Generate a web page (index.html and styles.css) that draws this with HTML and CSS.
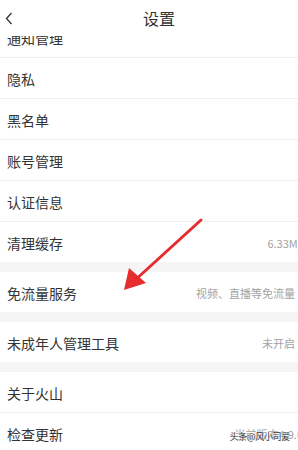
FILE: index.html
```html
<!DOCTYPE html>
<html lang="zh">
<head>
<meta charset="utf-8">
<link rel="stylesheet" href="styles.css">
</head>
<body>
<div class="page">
  <header class="header">
    <span class="back">
      <svg width="8" height="13" viewBox="0 0 8 13"><path d="M6.5 1 L1.5 6.5 L6.5 12" fill="none" stroke="#333" stroke-width="1.3"/></svg>
    </span>
    <h1 class="title">设置</h1>
  </header>
  <main class="main">
    <div class="scroll">
      <section class="group">
        <div class="row"><span class="label">通知管理</span></div>
        <div class="row"><span class="label">隐私</span></div>
        <div class="row"><span class="label">黑名单</span></div>
        <div class="row"><span class="label">账号管理</span></div>
        <div class="row"><span class="label">认证信息</span></div>
        <div class="row"><span class="label">清理缓存</span><span class="value cut-cache">6.33MB</span></div>
      </section>
      <section class="group">
        <div class="row"><span class="label">免流量服务</span><span class="value">视频、直播等免流量</span></div>
      </section>
      <section class="group">
        <div class="row"><span class="label">未成年人管理工具</span><span class="value">未开启</span></div>
      </section>
      <section class="group">
        <div class="row"><span class="label">关于火山</span></div>
        <div class="row"><span class="label">检查更新</span><span class="value cut-version">当前版本4.9.0</span></div>
      </section>
    </div>
  </main>
  <svg class="pointer" width="298" height="450" viewBox="0 0 298 450">
    <line x1="201" y1="220" x2="133" y2="282" stroke="#e62c2c" stroke-width="3" stroke-linecap="round"/>
    <polygon points="124,290 129,268 146,283" fill="#e62c2c"/>
  </svg>
  <div class="watermark">头条@风小司爱</div>
</div>
</body>
</html>
```
FILE: styles.css
```css
* { box-sizing: border-box; margin: 0; padding: 0; }
html, body { width: 298px; height: 450px; overflow: hidden; background: #f5f5f5; }
body { font-family: "Noto Sans CJK SC", "Noto Sans", sans-serif; color: #333; }
.page { position: relative; width: 298px; height: 450px; display: flex; flex-direction: column; }
.header {
  height: 36px; flex: none; background: #fff;
  display: flex; align-items: center; position: relative; z-index: 2;
}
.back { width: 20px; display: flex; align-items: center; padding-left: 5px; height: 100%; }
.title {
  flex: 1; text-align: center; font-size: 16px; font-weight: 400; color: #333;
  padding-right: 0; padding-left: 0; line-height: 36px; margin-left: -0px;
}
.main { flex: 1; overflow: hidden; }
.scroll { margin-top: -19px; display: flex; flex-direction: column; gap: 10px; }
.group { background: #fff; }
.row {
  height: 41px; display: flex; align-items: center; justify-content: space-between;
  padding: 2px 3px 0 7px; border-bottom: 1px solid #efefef;
}
.group .row:last-child { height: 40px; border-bottom: none; }
.label { font-size: 14px; color: #333; white-space: nowrap; }
.value { font-size: 11px; color: #a3a3a3; white-space: nowrap; }
.cut-cache { margin-right: -10px; }
.cut-version { margin-right: -8px; }
.pointer { position: absolute; left: 0; top: 0; pointer-events: none; z-index: 3; }
.watermark {
  position: absolute; right: 8px; bottom: 7px; z-index: 4;
  font-size: 9px; color: #333; letter-spacing: -0.3px;
  text-shadow: 0 0 1px #fff, 0 0 1px #fff;
}
```
